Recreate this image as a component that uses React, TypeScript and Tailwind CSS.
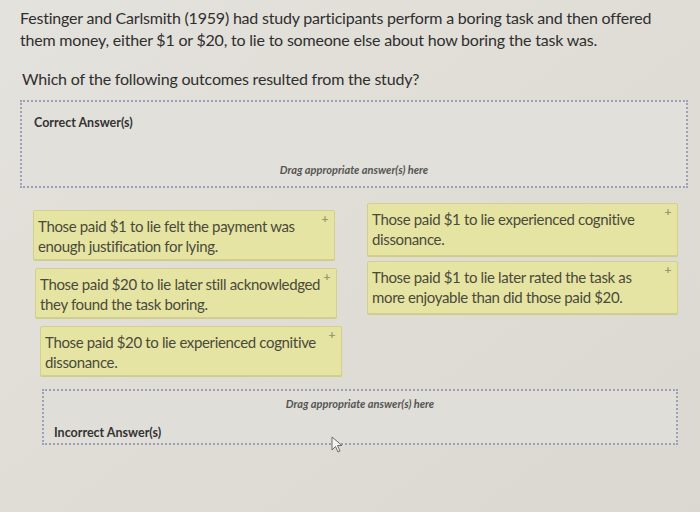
import React from 'react'

type Card = { text: string; ml: string; pr: string }

const leftCards: Card[] = [
  { text: 'Those paid $1 to lie felt the payment was enough justification for lying.', ml: 'ml-[33px]', pr: 'pr-[18px]' },
  { text: 'Those paid $20 to lie later still acknowledged they found the task boring.', ml: 'ml-[35px]', pr: 'pr-[8px]' },
  { text: 'Those paid $20 to lie experienced cognitive dissonance.', ml: 'ml-[40px]', pr: 'pr-[18px]' },
]

const rightCards: Card[] = [
  { text: 'Those paid $1 to lie experienced cognitive dissonance.', ml: 'ml-0', pr: 'pr-[18px]' },
  { text: 'Those paid $1 to lie later rated the task as more enjoyable than did those paid $20.', ml: 'ml-0', pr: 'pr-[18px]' },
]

const font = { fontFamily: 'Lato, "Open Sans", sans-serif' }

function AnswerCard({ card, width, height }: { card: Card; width: string; height: string }) {
  return (
    <div
      className={`relative ${card.ml} ${card.pr} ${width} ${height} rounded-[2px] border border-[#d3d08a] bg-[#e6e4a2] pl-[4px] pt-[5px] text-[15px] leading-[20px] tracking-[-0.35px] text-[#4a4a3c] shadow-[0_1px_0_#cfcc8a]`}
    >
      {card.text}
      <span className="absolute right-[6px] top-[1px] text-[12px] font-bold leading-[14px] text-[#9a9870]">+</span>
    </div>
  )
}

export default function App() {
  return (
    <div
      className="relative h-[512px] w-[700px] overflow-hidden bg-gradient-to-br from-[#e4e2dc] via-[#dfddd6] to-[#dad8d0] text-[#2f2f2f]"
      style={font}
    >
      <p className="whitespace-nowrap pl-[20px] pt-[7px] text-[16px] leading-[22px] tracking-[-0.2px]">
        Festinger and Carlsmith (1959) had study participants perform a boring task and then offered
        <br />
        them money, either $1 or $20, to lie to someone else about how boring the task was.
      </p>
      <p className="mt-[17px] pl-[22px] text-[16px] leading-[22px] tracking-[-0.2px]">
        Which of the following outcomes resulted from the study?
      </p>

      <div className="ml-[20px] mt-[10px] flex h-[88px] w-[668px] flex-col border-2 border-dotted border-[#9e9eb4] bg-[#e2e0da]">
        <div className="pl-[12px] pt-[12px] text-[12.5px] font-bold leading-[18px] text-[#333]">Correct Answer(s)</div>
        <div className="mt-auto pb-[9px] text-center text-[11px] font-bold italic leading-[14px] text-[#555]">
          Drag appropriate answer(s) here
        </div>
      </div>

      <div className="mt-[15px] flex">
        <div className="flex w-[346px] flex-col gap-[8px] pt-[7px]">
          {leftCards.map((card) => (
            <AnswerCard key={card.text} card={card} width="w-[302px]" height="h-[50px]" />
          ))}
        </div>
        <div className="ml-[21px] flex flex-col gap-[5px]">
          {rightCards.map((card) => (
            <AnswerCard key={card.text} card={card} width="w-[311px]" height="h-[53px]" />
          ))}
        </div>
      </div>

      <div className="ml-[42px] mt-[13px] flex h-[56px] w-[636px] flex-col border-2 border-dotted border-[#9e9eb4] bg-[#e0ded8]">
        <div className="pt-[6px] text-center text-[11px] font-bold italic leading-[14px] text-[#555]">
          Drag appropriate answer(s) here
        </div>
        <div className="mt-auto pb-[1px] pl-[10px] text-[12.5px] font-bold leading-[18px] text-[#333]">Incorrect Answer(s)</div>
      </div>

      <svg className="absolute left-[331px] top-[436px]" width="14" height="18" viewBox="0 0 14 18">
        <path d="M1 1 L1 14 L4.5 10.5 L7 16 L9 15 L6.5 9.5 L11 9.5 Z" fill="#f4f4f0" stroke="#6a6a66" strokeWidth="1" />
      </svg>
    </div>
  )
}
